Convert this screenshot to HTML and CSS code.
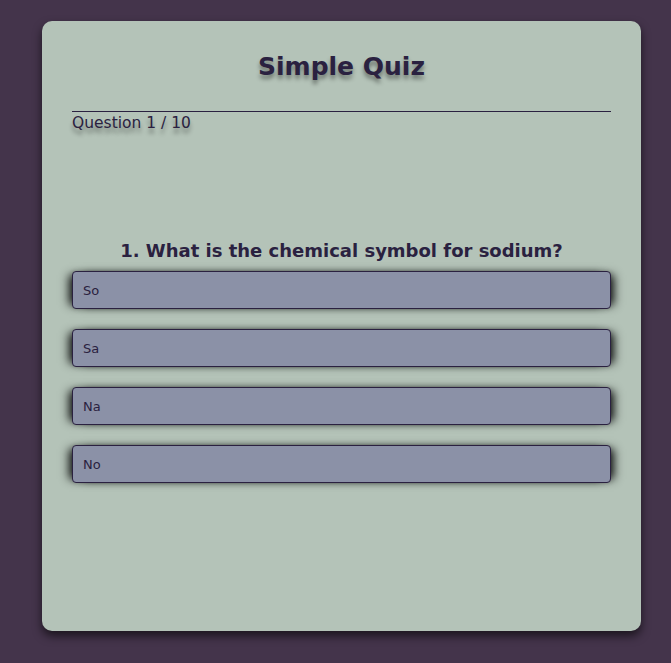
FILE: index.html
```html
<!DOCTYPE html>
<html lang="en">
<head>
<meta charset="utf-8">
<title>Simple Quiz</title>
<link rel="stylesheet" href="styles.css">
</head>
<body>
<div class="quiz">
  <h1 class="title">Simple Quiz</h1>
  <hr class="rule">
  <div class="progress">Question 1 / 10</div>
  <h2 class="question">1. What is the chemical symbol for sodium?</h2>
  <div class="options">
    <button class="option">So</button>
    <button class="option">Sa</button>
    <button class="option">Na</button>
    <button class="option">No</button>
  </div>
</div>
</body>
</html>
```
FILE: styles.css
```css
html, body {
  margin: 0;
  padding: 0;
  background: #44344b;
}
body {
  padding: 21px 0 0 42px;
  font-family: "DejaVu Sans", Verdana, sans-serif;
  color: #2a2140;
  height: 663px;
  box-sizing: border-box;
}
.quiz {
  width: 599px;
  height: 610px;
  box-sizing: border-box;
  background: #b4c3b8;
  border-radius: 10px;
  padding: 30px 30px;
  box-shadow: 0 5px 10px rgba(0, 0, 0, 0.6);
}
.title {
  margin: 0;
  padding-top: 0;
  text-align: center;
  font-size: 25px;
  line-height: 32px;
  font-weight: bold;
  text-shadow: 0 4px 4px rgba(0, 0, 0, 0.4);
}
.rule {
  margin: 28px 0 0;
  border: 0;
  border-top: 1px solid #2a2140;
  height: 0;
}
.progress {
  font-size: 15.5px;
  line-height: 22px;
  font-family: "DejaVu Sans", sans-serif;
  text-shadow: 0 5px 4px rgba(0, 0, 0, 0.4);
}
.question {
  margin: 105px 0 0;
  text-align: center;
  font-size: 18px;
  line-height: 24px;
  font-weight: bold;
}
.options {
  margin-top: 8px;
  display: flex;
  flex-direction: column;
  gap: 20px;
}
.option {
  height: 38px;
  background: #8b91a7;
  border: 1px solid #2a2140;
  border-radius: 4px;
  text-align: left;
  padding: 0 10px;
  font-family: "DejaVu Sans", sans-serif;
  font-size: 13px;
  color: #2a2140;
  box-shadow: -7px 0 9px -4px rgba(0, 0, 0, 0.9), 7px 0 9px -4px rgba(0, 0, 0, 0.9), 0 0 5px rgba(0, 0, 0, 0.15);
}
```
